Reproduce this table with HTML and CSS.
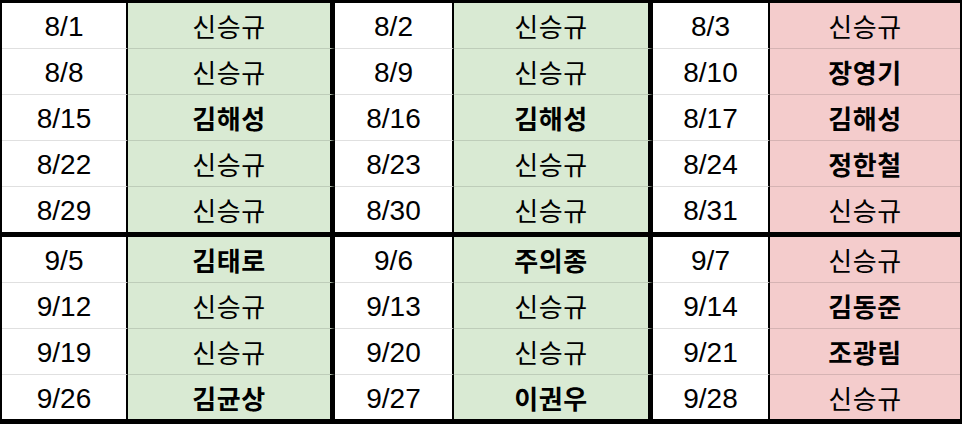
FILE: index.html
```html
<!DOCTYPE html>
<html lang="ko">
<head>
<meta charset="utf-8">
<link rel="stylesheet" href="styles.css">
</head>
<body>
<div class="sheet">
  <div class="half top">
    <div class="c d">8/1</div><div class="c n g">신승규</div><div class="c d">8/2</div><div class="c n g">신승규</div><div class="c d">8/3</div><div class="c n p">신승규</div>
    <div class="c d">8/8</div><div class="c n g">신승규</div><div class="c d">8/9</div><div class="c n g">신승규</div><div class="c d">8/10</div><div class="c n p b">장영기</div>
    <div class="c d">8/15</div><div class="c n g b">김해성</div><div class="c d">8/16</div><div class="c n g b">김해성</div><div class="c d">8/17</div><div class="c n p b">김해성</div>
    <div class="c d">8/22</div><div class="c n g">신승규</div><div class="c d">8/23</div><div class="c n g">신승규</div><div class="c d">8/24</div><div class="c n p b">정한철</div>
    <div class="c d last">8/29</div><div class="c n g last">신승규</div><div class="c d last">8/30</div><div class="c n g last">신승규</div><div class="c d last">8/31</div><div class="c n p last">신승규</div>
  </div>
  <div class="half bottom">
    <div class="c d">9/5</div><div class="c n g b">김태로</div><div class="c d">9/6</div><div class="c n g b">주의종</div><div class="c d">9/7</div><div class="c n p">신승규</div>
    <div class="c d">9/12</div><div class="c n g">신승규</div><div class="c d">9/13</div><div class="c n g">신승규</div><div class="c d">9/14</div><div class="c n p b">김동준</div>
    <div class="c d">9/19</div><div class="c n g">신승규</div><div class="c d">9/20</div><div class="c n g">신승규</div><div class="c d">9/21</div><div class="c n p b">조광림</div>
    <div class="c d last">9/26</div><div class="c n g b last">김균상</div><div class="c d last">9/27</div><div class="c n g b last">이권우</div><div class="c d last">9/28</div><div class="c n p last">신승규</div>
  </div>
</div>
</body>
</html>
```
FILE: styles.css
```css
html, body {
  margin: 0;
  padding: 0;
  background: #ffffff;
}
.sheet {
  width: 962px;
  height: 424px;
  box-sizing: border-box;
  border-top: 3px solid #000;
  border-left: 2px solid #000;
  border-right: 2px solid #000;
  border-bottom: 5px solid #000;
  display: flex;
  flex-direction: column;
  font-family: "Liberation Sans", "Noto Sans CJK KR", sans-serif;
  color: #000;
}
.half {
  display: grid;
  grid-template-columns: 126px 207px 119px 199px 117px 190px;
}
.top {
  grid-template-rows: repeat(4, 46px) 45px;
  border-bottom: 5px solid #000;
}
.bottom {
  grid-template-rows: repeat(3, 46px) 44px;
}
.c {
  box-sizing: border-box;
  display: flex;
  align-items: center;
  justify-content: center;
  border-bottom: 1px solid rgba(0, 0, 0, 0.12);
}
.c.last {
  border-bottom: none;
}
.d {
  font-size: 28px;
  background: #ffffff;
  padding-top: 3px;
}
.n {
  font-family: "Noto Sans CJK KR", "Liberation Sans", sans-serif;
  font-size: 26px;
  letter-spacing: 0.5px;
}
.half > .c:nth-child(6n+1) { border-right: 2px solid #000; }
.half > .c:nth-child(6n+2) { border-right: 5px solid #000; }
.half > .c:nth-child(6n+3) { border-right: 2px solid #000; }
.half > .c:nth-child(6n+4) { border-right: 5px solid #000; }
.half > .c:nth-child(6n+5) { border-right: 2px solid #000; }
.g { background: #d9ead3; }
.p { background: #f4cccc; }
.b { font-weight: 700; }
```
